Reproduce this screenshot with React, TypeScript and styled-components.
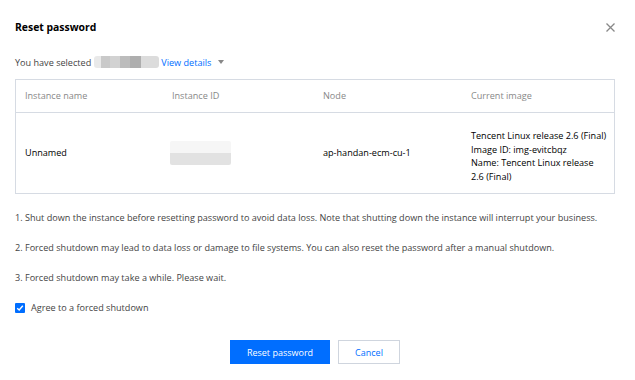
import React from "react";
import styled, { createGlobalStyle } from "styled-components";

const GlobalStyle = createGlobalStyle`
  html, body { margin: 0; padding: 0; background: #fff; }
  body { font-family: "Open Sans", "Noto Sans", sans-serif; font-size: 9.1px; color: #333; }
`;

const Dialog = styled.div`
  width: 635px;
  height: 380px;
  box-sizing: border-box;
  padding: 18px 20px 0 15px;
  background: #fff;
`;

const Header = styled.div`
  display: flex;
  align-items: center;
  justify-content: space-between;
  height: 18px;
`;

const Title = styled.h2`
  margin: 0;
  font-size: 10.4px;
  font-weight: 700;
  color: #000;
  line-height: 18px;
`;

const CloseButton = styled.button`
  border: 0;
  background: none;
  padding: 0;
  width: 9px;
  height: 9px;
  display: flex;
  cursor: pointer;
`;

const SelectedRow = styled.div`
  display: flex;
  align-items: center;
  margin-top: 19px;
  height: 14px;
  color: #444;
`;

const Blur = styled.span`
  display: inline-block;
  width: 65px;
  height: 12px;
  margin: 0 2px 0 3px;
  border-radius: 3px;
  background: linear-gradient(
    90deg,
    #e9e9e9 0 10%,
    #c9c9c9 10% 25%,
    #d2d2d2 25% 40%,
    #bcbcbc 40% 55%,
    #aeaeae 55% 72%,
    #dcdcdc 72% 100%
  );
`;

const Link = styled.a`
  color: #006eff;
  text-decoration: none;
`;

const Caret = styled.span`
  display: inline-block;
  margin-left: 7px;
  width: 0;
  height: 0;
  border-left: 3px solid transparent;
  border-right: 3px solid transparent;
  border-top: 4px solid #888;
`;

const Table = styled.div`
  margin-top: 10px;
  border: 1px solid #d6dbe3;
`;

const TRow = styled.div<{ $head?: boolean }>`
  display: grid;
  grid-template-columns: 147px 151px 148px 1fr;
  align-items: center;
  height: ${(p) => (p.$head ? "32px" : "80px")};
  border-bottom: ${(p) => (p.$head ? "1px solid #d6dbe3" : "none")};
  color: ${(p) => (p.$head ? "#888" : "#000")};
`;

const Cell = styled.div<{ $offset?: number }>`
  padding: ${(p) => p.$offset || 0}px 6px 0 9px;
  line-height: 14px;
`;

const ImageLine = styled.div`
  line-height: 13.5px;
`;

const IdBlur = styled.div`
  width: 61px;
  height: 24px;
  margin-left: -2px;
  background: linear-gradient(
    180deg,
    #f6f6f6 0 50%,
    #e2e2e2 50% 100%
  );
  border-radius: 2px;
`;

const Notes = styled.ol`
  list-style: none;
  margin: 17px 0 0;
  padding: 0;
  display: flex;
  flex-direction: column;
  gap: 16px;
  color: #444;
`;

const Note = styled.li`
  line-height: 14px;
`;

const CheckRow = styled.label`
  display: flex;
  align-items: center;
  gap: 6px;
  margin-top: 16px;
  line-height: 14px;
  color: #444;
`;

const Box = styled.span`
  width: 10px;
  height: 10px;
  border-radius: 1px;
  background: #006eff;
  display: flex;
  align-items: center;
  justify-content: center;
`;

const Footer = styled.div`
  display: flex;
  justify-content: center;
  gap: 8px;
  margin-top: 25px;
`;

const Button = styled.button<{ $primary?: boolean }>`
  box-sizing: border-box;
  height: 24px;
  min-width: ${(p) => (p.$primary ? "100px" : "62px")};
  padding: 0 12px;
  font-family: inherit;
  font-size: 9px;
  border: 1px solid ${(p) => (p.$primary ? "#006eff" : "#cfd5de")};
  background: ${(p) => (p.$primary ? "#006eff" : "#fff")};
  color: ${(p) => (p.$primary ? "#fff" : "#006eff")};
  cursor: pointer;
`;

export default function App() {
  return (
    <Dialog>
      <GlobalStyle />
      <Header>
        <Title>Reset password</Title>
        <CloseButton aria-label="Close">
          <svg width="9" height="9" viewBox="0 0 9 9">
            <path d="M0.5 0.5 L8.5 8.5 M8.5 0.5 L0.5 8.5" stroke="#888" strokeWidth="1.3" />
          </svg>
        </CloseButton>
      </Header>
      <SelectedRow>
        You have selected
        <Blur />
        <Link>View details</Link>
        <Caret />
      </SelectedRow>
      <Table>
        <TRow $head>
          <Cell>Instance name</Cell>
          <Cell>Instance ID</Cell>
          <Cell>Node</Cell>
          <Cell>Current image</Cell>
        </TRow>
        <TRow>
          <Cell>Unnamed</Cell>
          <Cell>
            <IdBlur />
          </Cell>
          <Cell>ap-handan-ecm-cu-1</Cell>
          <Cell $offset={6}>
            <ImageLine>Tencent Linux release 2.6 (Final)</ImageLine>
            <ImageLine>Image ID: img-evitcbqz</ImageLine>
            <ImageLine>Name: Tencent Linux release</ImageLine>
            <ImageLine>2.6 (Final)</ImageLine>
          </Cell>
        </TRow>
      </Table>
      <Notes>
        <Note>
          1. Shut down the instance before resetting password to avoid data loss. Note that shutting down the
          instance will interrupt your business.
        </Note>
        <Note>
          2. Forced shutdown may lead to data loss or damage to file systems. You can also reset the password after a
          manual shutdown.
        </Note>
        <Note>3. Forced shutdown may take a while. Please wait.</Note>
      </Notes>
      <CheckRow>
        <Box>
          <svg width="8" height="8" viewBox="0 0 8 8">
            <path d="M1.2 4.2 L3.2 6 L6.8 1.8" stroke="#fff" strokeWidth="1.4" fill="none" />
          </svg>
        </Box>
        Agree to a forced shutdown
      </CheckRow>
      <Footer>
        <Button $primary>Reset password</Button>
        <Button>Cancel</Button>
      </Footer>
    </Dialog>
  );
}
